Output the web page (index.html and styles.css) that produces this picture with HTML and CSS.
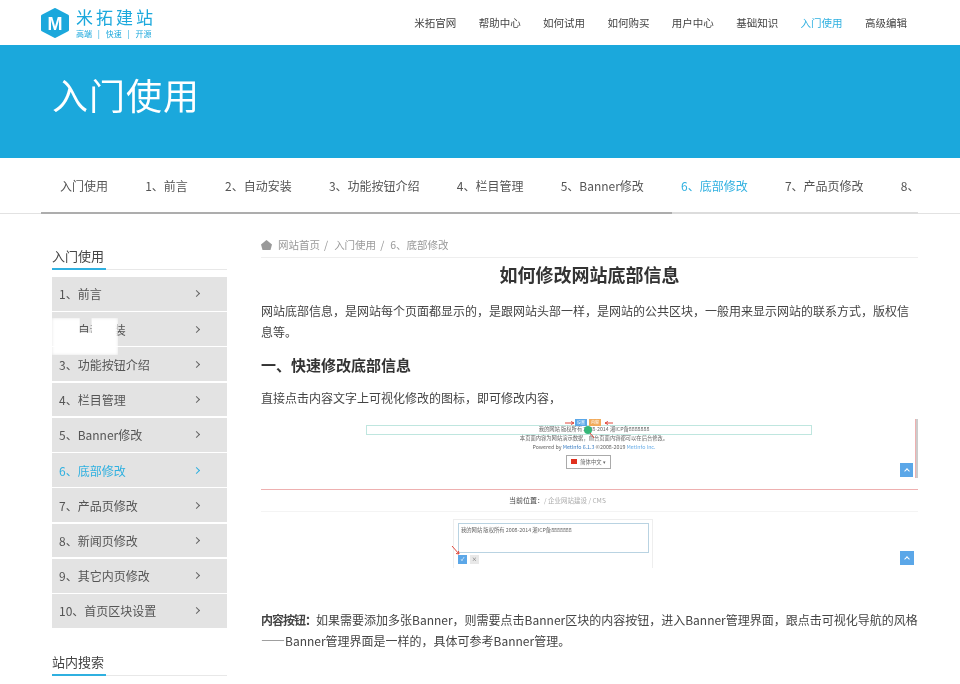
FILE: index.html
```html
<!DOCTYPE html>
<html lang="zh-CN">
<head>
  <meta charset="UTF-8">
  <title>如何修改网站底部信息</title>
  <link rel="stylesheet" href="styles.css">
</head>
<body>
<div class="header">
  <div class="logo">
    <svg class="logo-mark" width="28" height="30" viewBox="0 0 28 30">
      <polygon points="14,1.5 26.5,8 26.5,22 14,28.5 1.5,22 1.5,8" fill="#1ba8dc" stroke="#1ba8dc" stroke-width="3" stroke-linejoin="round"/>
      <text x="14" y="21.5" text-anchor="middle" class="logo-m">M</text>
    </svg>
    <div>
      <div class="logo-name">米拓建站</div>
      <div class="logo-sub">高端 | 快速 | 开源</div>
    </div>
  </div>
  <div class="top-nav">
    <a>米拓官网</a>
    <a>帮助中心</a>
    <a>如何试用</a>
    <a>如何购买</a>
    <a>用户中心</a>
    <a>基础知识</a>
    <a class="active">入门使用</a>
    <a>高级编辑</a>
  </div>
</div>

<div class="banner">入门使用</div>

<div class="sub-wrap">
  <div class="sub-inner">
    <div class="sub-nav">
      <a>入门使用</a>
      <a>1、前言</a>
      <a>2、自动安装</a>
      <a>3、功能按钮介绍</a>
      <a>4、栏目管理</a>
      <a>5、Banner修改</a>
      <a class="active">6、底部修改</a>
      <a>7、产品页修改</a>
      <a>8、</a>
    </div>
    <div class="sub-track"><div class="sub-thumb"></div></div>
  </div>
</div>

<div class="page">
  <div class="sidebar">
    <h3 class="side-title"><span>入门使用</span></h3>
    <div class="side-list">
      <a>1、前言<i></i></a>
      <a>2、自动安装<i></i></a>
      <a>3、功能按钮介绍<i></i></a>
      <a>4、栏目管理<i></i></a>
      <a>5、Banner修改<i></i></a>
      <a class="active">6、底部修改<i></i></a>
      <a>7、产品页修改<i></i></a>
      <a>8、新闻页修改<i></i></a>
      <a>9、其它内页修改<i></i></a>
      <a>10、首页区块设置<i></i></a>
      <div class="smudge"></div>
    </div>
    <h3 class="side-title search-title"><span>站内搜索</span></h3>
  </div>

  <div class="content">
    <div class="crumbs">
      <svg width="11" height="10" viewBox="0 0 11 10"><path d="M5.5 0 11 4.5 9.5 10H1.5L0 4.5Z" fill="#999"/></svg>
      <span>网站首页</span><b>/</b><span>入门使用</span><b>/</b><span>6、底部修改</span>
    </div>
    <h1>如何修改网站底部信息</h1>
    <p class="intro">网站底部信息，是网站每个页面都显示的，是跟网站头部一样，是网站的公共区块，一般用来显示网站的联系方式，版权信息等。</p>
    <h2>一、快速修改底部信息</h2>
    <p class="lead">直接点击内容文字上可视化修改的图标，即可修改内容，</p>

    <div class="shot">
      <div class="shot-top">
        <div class="edit-bar"></div>
        <div class="shot-lines">
          <div>我的网站 版权所有 2008-2014 湘ICP备8888888</div>
          <div>本页面内容为网站演示数据，前台页面内容都可以在后台修改。</div>
          <div>Powered by <em>MetInfo 6.1.3</em> ©2008-2019 <u>MetInfo Inc.</u></div>
        </div>
        <div class="tag tag-blue">设置</div>
        <div class="tag tag-orange">内容</div>
        <div class="pen"></div>
        <svg class="arrows" width="657" height="30" viewBox="0 0 657 30">
          <path d="M304 5H313M313 5 310 3.5M313 5 310 6.5M352 5H344M344 5 347 3.5M344 5 347 6.5M333 20 329 15" stroke="#e0483c" stroke-width="1" fill="none"/>
        </svg>
        <div class="lang"><i></i>简体中文 ▾</div>
        <div class="up up-one"></div>
        <div class="scroll"></div>
      </div>
      <div class="shot-bottom">
        <div class="shot-crumb"><strong>当前位置：</strong>/ 企业网站建设 / CMS</div>
        <div class="editor">
          <div class="editor-box">我的网站 版权所有 2008-2014 湘ICP备8888888</div>
          <div class="editor-btns"><span class="ok">✓</span><span class="no">×</span></div>
        </div>
        <svg class="arrow-ok" width="9" height="10" viewBox="0 0 9 10">
          <path d="M1 1 8 9M8 9 7.5 6M8 9 5 8.5" stroke="#e0483c" stroke-width="1" fill="none"/>
        </svg>
        <div class="up up-two"></div>
      </div>
    </div>

    <p class="note"><strong>内容按钮：</strong>如果需要添加多张Banner，则需要点击Banner区块的内容按钮，进入Banner管理界面，跟点击可视化导航的风格<br>——Banner管理界面是一样的，具体可参考Banner管理。</p>
  </div>
</div>
</body>
</html>
```

FILE: styles.css
```css
html, body {
  height: 684px;
  overflow: hidden;
}

body {
  margin: 0;
  font-family: "Noto Sans CJK SC", "Noto Sans", sans-serif;
  font-size: 12px;
  color: #444;
  background-color: white;
  filter: blur(0.4px);
}

/* header */
.header {
  height: 45px;
  display: flex;
  justify-content: space-between;
  align-items: center;
}

.logo {
  display: flex;
  align-items: center;
  gap: 7px;
  margin-left: 41px;
}

.logo-mark {
  display: block;
}

.logo-m {
  font-family: "Liberation Sans", sans-serif;
  font-size: 18px;
  font-weight: bold;
  fill: white;
}

.logo-name {
  font-size: 17px;
  line-height: 20px;
  letter-spacing: 3px;
  color: #1ba8dc;
}

.logo-sub {
  margin-top: 2px;
  font-size: 8px;
  line-height: 10px;
  word-spacing: 4px;
  color: #1ba8dc;
}

.top-nav {
  display: flex;
  gap: 22.4px;
  margin-right: 53px;
  font-size: 10.5px;
}

.top-nav a {
  color: #444;
}

.top-nav a.active {
  color: #2fb0e0;
}

/* banner */
.banner {
  height: 97px;
  display: flex;
  align-items: center;
  padding: 0 0 16px 52px;
  background-color: #1ba8dc;
  color: white;
  font-size: 36px;
  letter-spacing: 1px;
}

/* sub nav */
.sub-wrap {
  border-bottom: 1px solid #e2e2e2;
}

.sub-inner {
  margin: 0 42px 0 41.4px;
}

.sub-nav {
  height: 54px;
  display: flex;
  overflow: hidden;
  color: #555;
}

.sub-nav a {
  flex: none;
  padding: 0 18.6px;
  line-height: 55px;
  white-space: nowrap;
}

.sub-nav a.active {
  color: #2fb0e0;
}

.sub-track {
  height: 2px;
  margin-bottom: -1px;
  background-color: #dcdcdc;
}

.sub-thumb {
  width: 631px;
  height: 2px;
  background-color: #adadad;
}

/* page */
.page {
  display: flex;
  gap: 34px;
  padding: 0 42px 0 52px;
}

.sidebar {
  flex: none;
  width: 175px;
}

.side-title {
  margin: 32px 0 7px;
  height: 23px;
  border-bottom: 1px solid #e8e8e8;
  font-size: 13px;
  font-weight: normal;
  line-height: 20px;
}

.side-title span {
  display: inline-block;
  height: 22px;
  padding-right: 2px;
  border-bottom: 2px solid #2fb0e0;
}

.search-title {
  margin-top: 24px;
}

.side-list {
  position: relative;
  display: flex;
  flex-direction: column;
  gap: 1.55px;
}

.side-list a {
  height: 33.7px;
  display: flex;
  justify-content: space-between;
  align-items: center;
  padding: 0 27px 0 7px;
  background-color: #e3e3e3;
  color: #555;
}

.side-list a i {
  width: 4px;
  height: 4px;
  margin-right: 1px;
  border-top: 1px solid #666;
  border-right: 1px solid #666;
  transform: rotate(45deg);
}

.side-list a.active {
  color: #2fb0e0;
}

.side-list a.active i {
  border-color: #2fb0e0;
}

/* white patch painted over the second item */
.smudge {
  position: absolute;
  left: 0;
  top: 41px;
  width: 66px;
  height: 37px;
  background-color: white;
  clip-path: polygon(0 0, 42% 0, 42% 40%, 60% 40%, 60% 0, 100% 0, 100% 100%, 0 100%);
  filter: blur(1.5px);
}

/* content */
.content {
  flex: 1;
  min-width: 0;
}

.crumbs {
  box-sizing: border-box;
  display: flex;
  align-items: center;
  font-size: 10.5px;
  color: #999;
  border-bottom: 1px solid #eee;
  height: 44px;
  padding-top: 18px;
}

.crumbs svg {
  margin-right: 6px;
}

.crumbs b {
  font-weight: normal;
  margin: 0 6px 0 4px;
}

h1 {
  margin: 4px 0 0;
  text-align: center;
  font-size: 18px;
  line-height: 24px;
  color: #333;
}

p {
  margin: 0;
  line-height: 21px;
  color: #444;
}

.intro {
  margin-top: 13.5px;
}

h2 {
  margin: 12.5px 0 0;
  font-size: 15px;
  line-height: 22px;
  color: #333;
}

.lead {
  margin-top: 10.5px;
}

.note {
  margin-top: 40.5px;
  white-space: nowrap;
}

.note strong {
  letter-spacing: -1px;
}

/* screenshot inside the article */
.shot {
  margin-top: 10.5px;
  height: 150px;
  filter: blur(0.4px);
  font-size: 5.3px;
  color: #666;
}

.shot-top {
  position: relative;
  height: 71px;
  border-bottom: 1px solid #eeb0b0;
}

.edit-bar {
  position: absolute;
  left: 105px;
  right: 106px;
  top: 7px;
  height: 8px;
  border: 1px solid #bfe6df;
}

.tag {
  position: absolute;
  top: 1px;
  width: 12px;
  height: 7px;
  font-size: 4px;
  line-height: 7px;
  text-align: center;
  color: white;
}

.tag-blue {
  left: 314px;
  background-color: #5ba7e8;
}

.tag-orange {
  left: 328px;
  background-color: #f1aa5a;
}

.pen {
  position: absolute;
  left: 323px;
  top: 8px;
  width: 8px;
  height: 8px;
  border-radius: 50%;
  background-color: #35b779;
}

.arrows {
  position: absolute;
  left: 0;
  top: 0;
}

.shot-lines {
  position: absolute;
  left: 0;
  right: 0;
  top: 7px;
  margin-left: 9px;
  text-align: center;
  line-height: 9px;
}

.shot-lines em {
  font-style: normal;
  color: #3d7fc4;
}

.shot-lines u {
  text-decoration: none;
  color: #6aaee8;
}

.lang {
  position: absolute;
  left: 305px;
  top: 37px;
  width: 43px;
  height: 12px;
  border: 1px solid #aaa;
  line-height: 12px;
  text-align: center;
}

.lang i {
  display: inline-block;
  width: 6px;
  height: 5px;
  margin-right: 3px;
  background-color: #e0301e;
}

.up {
  position: absolute;
  width: 13px;
  height: 14px;
  display: flex;
  align-items: center;
  justify-content: center;
  background-color: #5ba7e8;
}

.up::before {
  content: "";
  width: 3px;
  height: 3px;
  margin-top: 2px;
  border-top: 1px solid white;
  border-left: 1px solid white;
  transform: rotate(45deg);
}

.up-one {
  right: 5px;
  top: 45px;
}

.up-two {
  right: 4px;
  top: 61px;
  width: 14px;
}

.scroll {
  position: absolute;
  right: 0;
  top: 1px;
  width: 2px;
  height: 59px;
  background-color: #ccc;
  border-left: 1px solid #eeb0b0;
}

.shot-bottom {
  position: relative;
  height: 78px;
}

.shot-crumb {
  height: 21px;
  line-height: 21px;
  padding-left: 248px;
  border-bottom: 1px solid #f4f4f4;
  font-size: 6.5px;
  color: #aaa;
}

.shot-crumb strong {
  font-weight: normal;
  font-size: 7px;
  color: #444;
}

.editor {
  margin: 7px 0 0 192px;
  width: 200px;
  height: 49px;
  border: 1px solid #eee;
  padding: 3px 3px 0 4px;
  box-sizing: border-box;
  border-bottom: 0;
}

.editor-box {
  box-sizing: border-box;
  height: 30px;
  padding: 2px;
  border: 1px solid #b9d3e2;
}

.editor-btns {
  display: flex;
  gap: 3px;
  margin-top: 2px;
}

.editor-btns span {
  width: 9px;
  height: 9px;
  line-height: 9px;
  text-align: center;
}

.ok {
  background-color: #5ba7e8;
  color: white;
}

.no {
  background-color: #e8e8e8;
}

.arrow-ok {
  position: absolute;
  left: 190px;
  top: 55px;
}
```
